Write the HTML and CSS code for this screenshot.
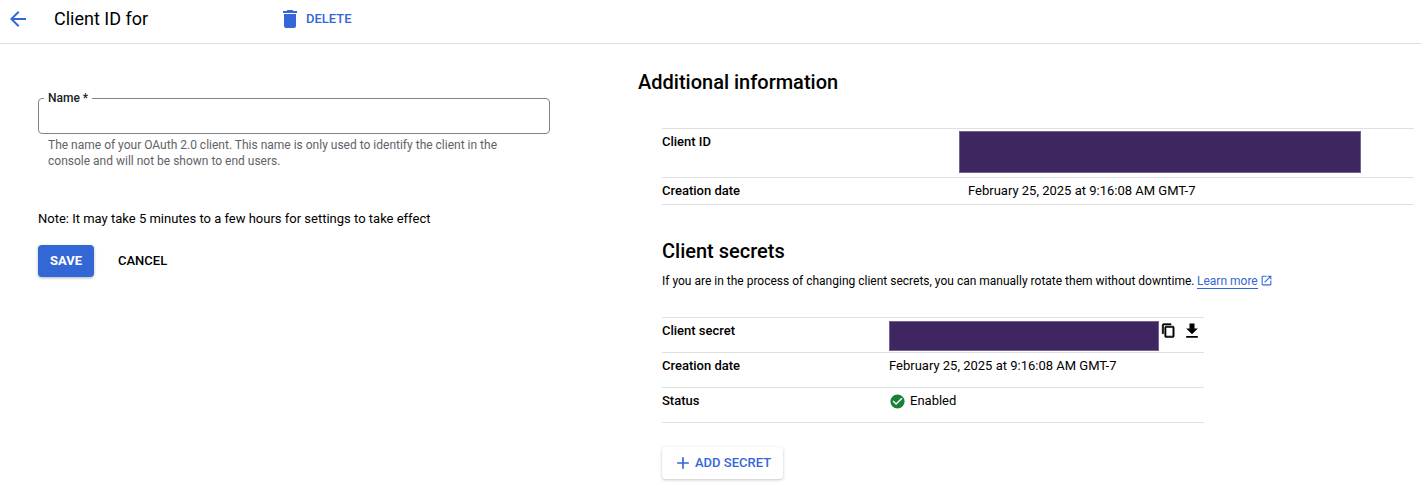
FILE: index.html
```html
<!DOCTYPE html>
<html lang="en">
<head>
<meta charset="utf-8">
<title>Client ID</title>
<link rel="stylesheet" href="styles.css">
</head>
<body>
<header class="topbar">
  <svg class="back" viewBox="0 0 24 24" width="24" height="24"><path d="M20 11H7.830l5.590-5.590L12 4l-8 8 8 8 1.410-1.410L7.830 13H20z"/></svg>
  <h1 class="title">Client ID for</h1>
  <div class="delete">
    <svg viewBox="0 0 24 24" width="24" height="24"><path d="M6 19c0 1.100.9 2 2 2h8c1.100 0 2-.9 2-2V7H6v12zM19 4h-3.500l-1-1h-5l-1 1H5v2h14V4z"/></svg>
    <span class="delete-text">DELETE</span>
  </div>
</header>
<main class="content">
  <section class="left">
    <div class="field">
      <span class="field-label">Name *</span>
    </div>
    <p class="help">The name of your OAuth 2.0 client. This name is only used to identify the client in the console and will not be shown to end users.</p>
    <p class="note">Note: It may take 5 minutes to a few hours for settings to take effect</p>
    <div class="actions">
      <button class="save">SAVE</button>
      <button class="cancel">CANCEL</button>
    </div>
  </section>
  <section class="right">
    <h2 class="heading">Additional information</h2>
    <div class="inner">
      <div class="info info-id">
        <div class="row row-id">
          <div class="key">Client ID</div>
          <div class="redact redact-id"></div>
        </div>
        <div class="row row-date">
          <div class="key">Creation date</div>
          <div class="val">February 25, 2025 at 9:16:08 AM GMT-7</div>
        </div>
      </div>
      <h2 class="heading secrets">Client secrets</h2>
      <p class="lead">If you are in the process of changing client secrets, you can manually rotate them without downtime. <a class="learn">Learn more</a><svg class="ext" viewBox="0 0 24 24" width="13" height="13"><path d="M19 19H5V5h7V3H5a2 2 0 0 0-2 2v14a2 2 0 0 0 2 2h14c1.100 0 2-.9 2-2v-7h-2v7zM14 3v2h3.590l-9.830 9.830 1.410 1.410L19 6.410V10h2V3h-7z"/></svg></p>
      <div class="info info-secret">
        <div class="srow">
          <div class="key">Client secret</div>
          <div class="secret-cell">
            <div class="redact redact-secret"></div>
            <svg class="tool-copy" viewBox="0 0 24 24" width="15" height="15"><path d="M16 1H4c-1.100 0-2 .9-2 2v14h2V3h12V1zm3 4H8c-1.100 0-2 .9-2 2v14c0 1.100.9 2 2 2h11c1.100 0 2-.9 2-2V7c0-1.100-.9-2-2-2zm0 16H8V7h11v14z"/></svg>
            <svg class="tool-save" viewBox="0 0 24 24" width="20" height="20"><path d="M19 9h-4V3H9v6H5l7 7 7-7zM5 18v2h14v-2H5z"/></svg>
          </div>
        </div>
        <div class="srow">
          <div class="key">Creation date</div>
          <div class="val">February 25, 2025 at 9:16:08 AM GMT-7</div>
        </div>
        <div class="srow">
          <div class="key">Status</div>
          <div class="val status">
            <svg viewBox="0 0 24 24" width="17" height="17"><path class="ok" d="M12 2a10 10 0 1 0 0 20 10 10 0 0 0 0-20zm-2 15-5-5 1.410-1.410L10 14.170l7.590-7.590L19 8l-9 9z"/></svg>
            <span>Enabled</span>
          </div>
        </div>
      </div>
      <button class="add">
        <svg viewBox="0 0 24 24" width="20" height="20"><path d="M19 13h-6v6h-2v-6H5v-2h6V5h2v6h6v2z"/></svg>
        <span class="add-text">ADD SECRET</span>
      </button>
    </div>
  </section>
</main>
</body>
</html>
```
FILE: styles.css
```css
* { box-sizing: border-box; }
html, body { margin: 0; padding: 0; }
body {
  font-family: Roboto, "Liberation Sans", sans-serif;
  color: #000;
  background: #fff;
  height: 497px;
  overflow: hidden;
}
h1, h2, p { margin: 0; }
button { font-family: inherit; border: 0; cursor: pointer; }

.topbar {
  display: flex;
  align-items: center;
  height: 44px;
  border-bottom: 1px solid #e0e0e0;
  padding-left: 6px;
  padding-bottom: 5px;
}
.back { fill: #3367d6; }
.title {
  font-size: 18px;
  font-weight: 400;
  line-height: 24px;
  margin-left: 24px;
  width: 224px;
}
.delete {
  display: flex;
  align-items: center;
  color: #3367d6;
  fill: #3367d6;
  font-size: 13px;
  font-weight: 500;
  gap: 4px;
}
.delete-text { margin-bottom: 2px; }

.content { display: flex; }
.left { width: 638px; padding: 54px 0 0 38px; }
.field {
  width: 512px;
  height: 36px;
  border: 1px solid #80868b;
  border-radius: 4px;
  position: relative;
}
.field-label {
  position: absolute;
  left: 5px;
  top: -9px;
  padding: 0 4px;
  background: #fff;
  font-size: 12px;
  font-weight: 500;
  line-height: 16px;
  color: #202124;
}
.help {
  width: 480px;
  margin: 3px 0 0 10px;
  font-size: 12px;
  line-height: 16px;
  color: #5f6368;
}
.note { margin-top: 41px; font-size: 13px; line-height: 18px; }
.actions { display: flex; align-items: center; margin-top: 17px; gap: 24px; }
.save {
  width: 56px;
  height: 32px;
  padding: 0 0 2px;
  background: #3367d6;
  color: #fff;
  border-radius: 4px;
  font-size: 13px;
  font-weight: 700;
  box-shadow: 0 1px 3px rgba(60,64,67,.4);
}
.cancel {
  height: 32px;
  padding: 0 0 2px;
  background: none;
  color: #000;
  font-size: 13px;
  font-weight: 500;
}

.right { flex: 1; padding-top: 25px; }
.heading { font-size: 20px; font-weight: 500; line-height: 26px; }
.inner { padding: 33px 7px 0 24px; }
.key { font-weight: 500; font-size: 13px; line-height: 16px; }
.val { font-size: 13px; line-height: 16px; }
.row {
  display: grid;
  grid-template-columns: 297px 1fr;
  border-bottom: 1px solid #e0e0e0;
}
.row-id { height: 50px; border-top: 1px solid #e0e0e0; padding-top: 5px; }
.row-id .redact { margin-top: -3px; }
.row-date { height: 27px; padding-top: 5px; }
.row-date .val { padding-left: 9px; }
.redact { background: #3e2760; border: 1px solid #75638f; }
.redact-id { width: 402px; height: 42px; }
.secrets { margin-top: 33px; }
.lead { margin-top: 8px; font-size: 12px; line-height: 18px; }
.learn { color: #3367d6; border-bottom: 1px solid #3367d6; margin-left: -.5px; }
.ext { fill: #3367d6; vertical-align: -2px; margin-left: 2.500px; }
.info-secret { width: 542px; margin-top: 27px; border-top: 1px solid #e0e0e0; }
.srow {
  display: grid;
  grid-template-columns: 227px 1fr;
  height: 35px;
  border-bottom: 1px solid #e0e0e0;
  padding-top: 5px;
}
.secret-cell { display: flex; align-items: flex-start; margin-top: -2px; }
.redact-secret { width: 270px; height: 30px; }
.tool-copy { margin: 2px 0 0 2px; stroke: #000; stroke-width: 1; }
.tool-save { margin: 0 0 0 6px; }
.ok { fill: #188038; }
.status { display: flex; align-items: flex-start; align-self: start; gap: 4px; }
.add {
  display: flex;
  align-items: center;
  gap: 2px;
  margin-top: 24px;
  height: 32px;
  width: 121px;
  padding: 0 0 0 11px;
  background: #fff;
  color: #3367d6;
  fill: #3367d6;
  border-radius: 4px;
  font-size: 13px;
  font-weight: 500;
  box-shadow: 0 1px 3px rgba(60,64,67,.3);
}
.add-text { margin-bottom: 2px; }
```
